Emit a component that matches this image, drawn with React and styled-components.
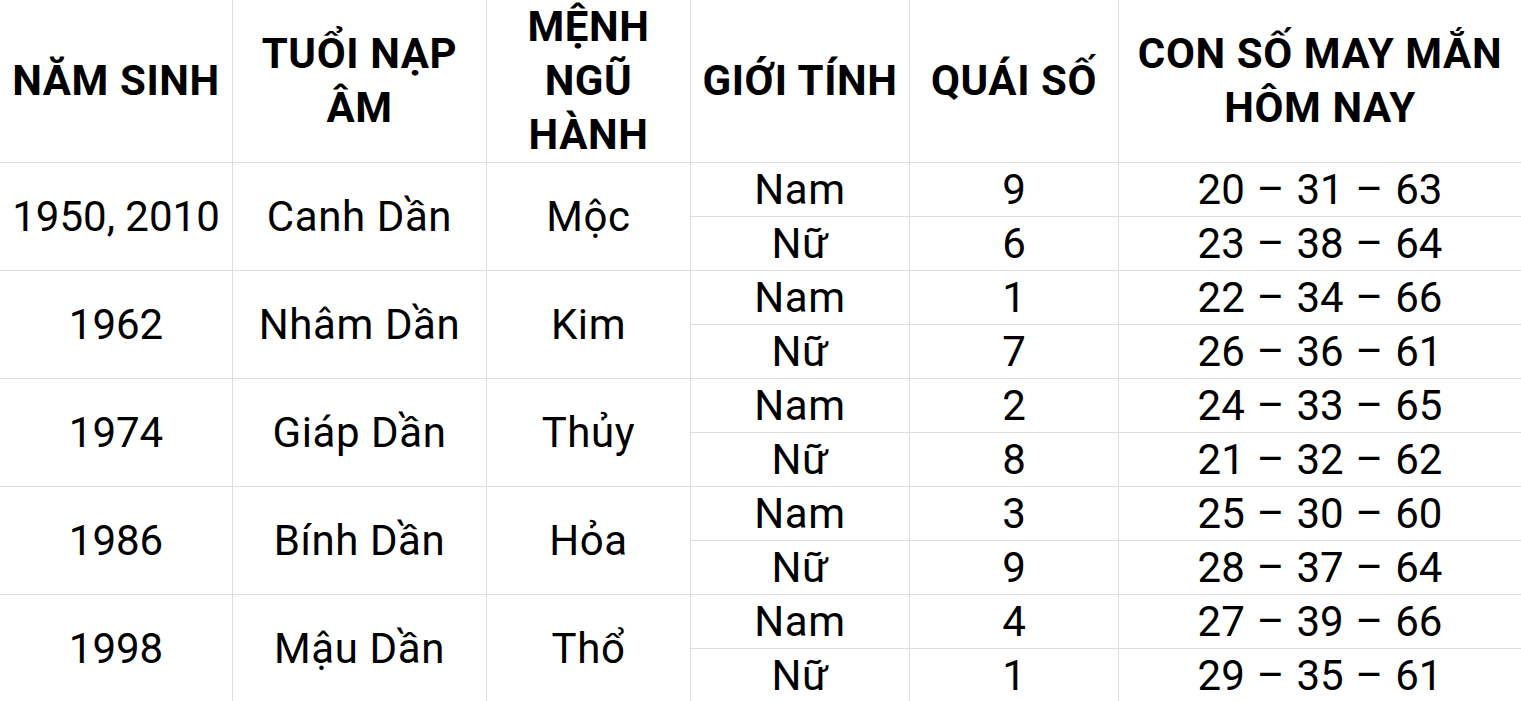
import React from "react";
import styled, { createGlobalStyle } from "styled-components";

const Global = createGlobalStyle`
  html, body { margin: 0; padding: 0; background: #fff; }
  body { font-family: Roboto, "Noto Sans", "Liberation Sans", sans-serif; color: #000; overflow: hidden; }
`;

const Table = styled.table`
  width: 1521px;
  table-layout: fixed;
  border-collapse: separate;
  border-spacing: 0;
  font-family: Roboto, "Noto Sans", "Liberation Sans", sans-serif;
`;

const Col = styled.col`
  width: ${(p) => p.$w}px;
`;

const Head = styled.th`
  height: 162px;
  padding: 0;
  font-size: 42px;
  font-weight: 700;
  line-height: 54px;
  letter-spacing: 0.6px;
  text-align: center;
  vertical-align: middle;
  border-right: ${(p) => (p.$last ? "none" : "1px solid #dedede")};
  border-bottom: 1px solid #dedede;
  color: #000;
`;

const Cell = styled.td`
  height: ${(p) => (p.$span ? 107 : 53)}px;
  padding: 0;
  font-size: 42px;
  font-weight: 400;
  line-height: 53px;
  letter-spacing: ${(p) => (p.$text ? "0.6px" : "0")};
  word-spacing: ${(p) => (p.$nums ? "1.6px" : "0")};
  text-align: center;
  vertical-align: middle;
  white-space: nowrap;
  border-right: ${(p) => (p.$last ? "none" : "1px solid #dedede")};
  border-bottom: 1px solid #dedede;
  color: #000;
`;

const data = [
  { year: "1950, 2010", tuoi: "Canh Dần", menh: "Mộc", rows: [["Nam", "9", "20 – 31 – 63"], ["Nữ", "6", "23 – 38 – 64"]] },
  { year: "1962", tuoi: "Nhâm Dần", menh: "Kim", rows: [["Nam", "1", "22 – 34 – 66"], ["Nữ", "7", "26 – 36 – 61"]] },
  { year: "1974", tuoi: "Giáp Dần", menh: "Thủy", rows: [["Nam", "2", "24 – 33 – 65"], ["Nữ", "8", "21 – 32 – 62"]] },
  { year: "1986", tuoi: "Bính Dần", menh: "Hỏa", rows: [["Nam", "3", "25 – 30 – 60"], ["Nữ", "9", "28 – 37 – 64"]] },
  { year: "1998", tuoi: "Mậu Dần", menh: "Thổ", rows: [["Nam", "4", "27 – 39 – 66"], ["Nữ", "1", "29 – 35 – 61"]] },
];

export default function App() {
  return (
    <>
      <Global />
      <Table>
        <colgroup>
          <Col $w={233} />
          <Col $w={254} />
          <Col $w={204} />
          <Col $w={219} />
          <Col $w={209} />
          <Col $w={402} />
        </colgroup>
        <thead>
          <tr>
            <Head>NĂM SINH</Head>
            <Head>TUỔI NẠP<br />ÂM</Head>
            <Head>MỆNH<br />NGŨ<br />HÀNH</Head>
            <Head>GIỚI TÍNH</Head>
            <Head>QUÁI SỐ</Head>
            <Head $last>CON SỐ MAY MẮN<br />HÔM NAY</Head>
          </tr>
        </thead>
        <tbody>
          {data.map((g) =>
            g.rows.map((r, i) => (
              <tr key={g.year + i}>
                {i === 0 && (
                  <>
                    <Cell rowSpan={2} $span>{g.year}</Cell>
                    <Cell rowSpan={2} $span $text>{g.tuoi}</Cell>
                    <Cell rowSpan={2} $span $text>{g.menh}</Cell>
                  </>
                )}
                <Cell $text>{r[0]}</Cell>
                <Cell>{r[1]}</Cell>
                <Cell $last $nums>{r[2]}</Cell>
              </tr>
            ))
          )}
        </tbody>
      </Table>
    </>
  );
}
